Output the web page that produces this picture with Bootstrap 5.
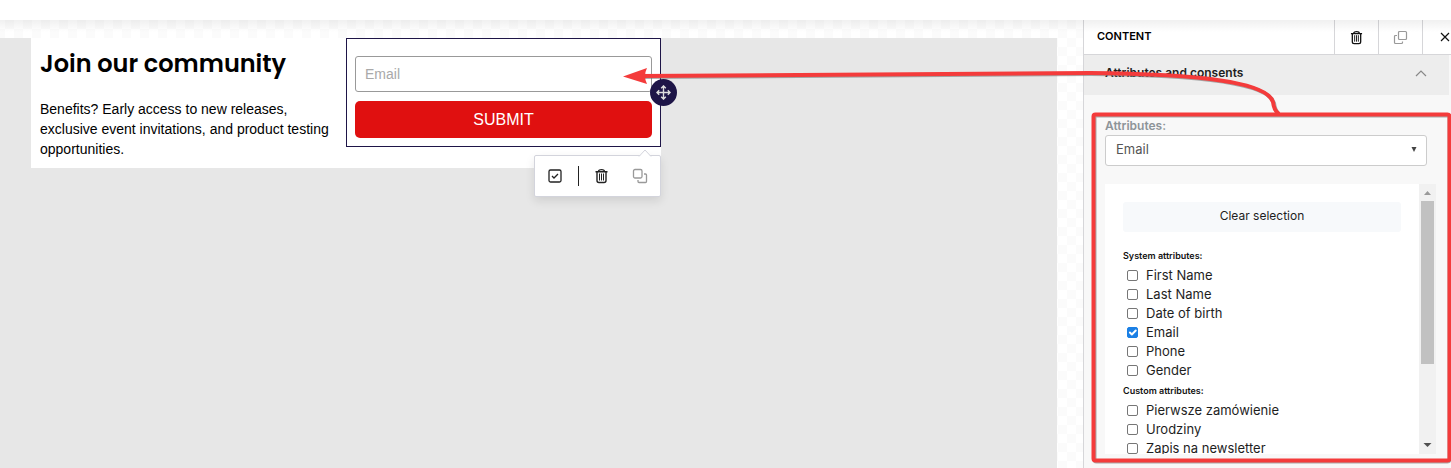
<!DOCTYPE html>
<html lang="en">
<head>
<meta charset="utf-8">
<meta name="viewport" content="width=device-width, initial-scale=1">
<title>Form editor</title>
<link href="https://cdn.jsdelivr.net/npm/bootstrap@5.3.0/dist/css/bootstrap.min.css" rel="stylesheet">
<style>
  body { font-family: Inter, sans-serif; font-size: 13px; color: #1e1e1e; background: #fff; }
  .topbar { height: 20px; }
  .workspace { min-height: 0; }
  .workspace-shade { top: 0; left: 0; right: 0; height: 12px; pointer-events: none; z-index: 2;
    background: linear-gradient(rgba(0,0,0,.06), rgba(0,0,0,0)); }
  .canvas-area { padding: 18px 26px 0 0; min-width: 0;
    background: repeating-conic-gradient(#fff 0 25%, #fbfbfb 0 50%) 5px 0 / 18px 18px; }
  .mail-bg { background: #e7e7e7; padding-left: 31px; }
  .mail-row { width: 630px; height: 130px; font-family: "Liberation Sans", Arial, sans-serif; color: #000; }
  .mail-copy { padding: 10px 0 0 9px; font-size: 14px; line-height: 20px; }
  .mail-copy h1 { font: 600 24px/32px Poppins, Inter, sans-serif; margin-bottom: 19px; }
  .form-block { border: 1px solid #1e1547; padding: 17px 8px 8px; height: 109px; }
  .mail-input { height: 36px; padding: 0 9px; font-size: 14px; border-color: #999; border-radius: 3px; }
  .mail-input::placeholder { color: #a9a9a9; }
  .mail-submit { height: 37px; margin-top: 9px; background: #e01010; color: #fff; font-size: 16px; border-radius: 5px; padding: 0; border: 0; }
  .tool-btn { background: none; border: 0; padding: 0; line-height: 0; color: #222; }
  .tool-btn.muted { color: #999; }
  .move-handle { width: 27px; height: 27px; right: -16px; top: 41px; background: #1e1547; z-index: 1; }
  .block-tools { top: 117px; right: 0; width: 127px; height: 42px; background: #fff; border: 1px solid #d3d4dc; border-radius: 2px; box-shadow: 0 4px 10px rgba(0,0,0,.1); }
  .block-tools .tool-tip { position: absolute; top: -7px; right: 8px; }
  .tool-group { gap: 15px; padding-left: 12px; }
  .tool-group .muted { margin-left: 8px; }
  .tool-split { width: 1px; height: 20px; background: #222; }

  .side-panel { width: 368px; background: #f8f8f8; border-left: 1px solid #d6d6d9; }
  .panel-head { height: 35px; background: #fff; border-bottom: 1px solid #d6d6d9; }
  .panel-head h2 { width: 250px; padding-left: 13px; font-size: 11px; line-height: 32px; font-weight: 600; color: #000; margin: 0; }
  .panel-head .tool-btn { width: 44px; border-left: 1px solid #d6d6d9; color: #111; }
  .panel-head .tool-btn.muted { color: #999; }
  .section-toggle { height: 40px; margin-right: 2px; background: #ededed; border: 0; padding: 0 22px 4px 21px; font-size: 12px; font-weight: 600; color: #1e1e1e; }
  .panel-body { padding: 22px 15px 14px 21px; min-height: 0; }
  .field-label { font-size: 12px; line-height: 18px; font-weight: 600; color: #8d9499; }
  .select-box { margin-right: 9px; margin-bottom: 18px; }
  .select-box select { height: 31px; padding: 0 10px 2px; font-size: 13px; color: #555; background: #fff; border-color: #ccc; border-radius: 3px; }
  .select-box svg { position: absolute; right: 10px; top: 12px; pointer-events: none; }
  .attr-list { min-height: 0; background: #fff; }
  .attr-items { padding: 18px 18px 0; }
  .clear-btn { height: 30px; background: #f7f9fb; border: 0; border-radius: 3px; padding: 0 0 3px; font-size: 12px; color: #1e1e1e; margin-bottom: 13px; }
  .group-title { font-size: 9px; line-height: 21px; font-weight: 600; color: #111; margin: 0; }
  .attr-option { height: 19px; padding-left: 4px; gap: 8px; }
  .attr-option input.form-check-input { width: 11px; height: 11px; margin: 0; border-radius: 2px; border: 1px solid #767676; background-size: 13px 13px; flex: none; }
  .attr-option input.form-check-input:checked { background-color: #1b80e5; border-color: #1b80e5; }
  .scroll-track { width: 17px; flex: none; background: #f1f1f1; }
  .scroll-track svg { height: 17px; width: 17px; flex: none; }
  .scroll-thumb { width: 13px; height: 69%; background: #c1c1c1; }
  .annotation { position: absolute; top: 0; right: 0; pointer-events: none; z-index: 5; }
</style>
</head>
<body class="vh-100 overflow-hidden d-flex flex-column position-relative">
<svg width="0" height="0" class="position-absolute" aria-hidden="true">
  <symbol id="i-trash" viewBox="0 0 14 16"><g fill="none" stroke="currentColor" stroke-width="1.4"><path d="M1 3.800h12M4 3.500C4 1 10 1 10 3.500M2.500 4v8.500c0 1.500.5 2 2 2h5c1.500 0 2-.5 2-2V4"/><path stroke-width="1" d="M5 5.500v7M7 5.500v7M9 5.500v7"/></g></symbol>
  <symbol id="i-copy" viewBox="0 0 16 16"><g fill="none" stroke="currentColor" stroke-width="1.300"><rect x="1.500" y="1.500" width="8.500" height="8.500" rx="1.500"/><path d="M12 6h1.500q1 0 1 1v6.500q0 1-1 1H7q-1 0-1-1V12"/></g></symbol>
</svg>
<header class="topbar flex-shrink-0 bg-white"></header>
<div class="workspace flex-fill d-flex position-relative">
  <div class="workspace-shade position-absolute"></div>
  <main class="canvas-area flex-fill d-flex flex-column">
    <div class="mail-bg flex-fill">
      <div class="mail-row row g-0 bg-white">
        <div class="col-6 mail-copy">
          <h1>Join our community</h1>
          <p class="mb-0">Benefits? Early access to new releases, exclusive event invitations, and product testing opportunities.</p>
        </div>
        <div class="col-6 position-relative">
          <form class="form-block" onsubmit="return false">
            <input type="email" class="form-control mail-input" placeholder="Email" aria-label="Email">
            <button type="submit" class="btn w-100 d-block mail-submit">SUBMIT</button>
          </form>
          <button type="button" class="tool-btn move-handle position-absolute rounded-circle d-flex align-items-center justify-content-center" aria-label="Move block">
            <svg width="15" height="15" viewBox="0 0 15 15" fill="none" stroke="#ddd" stroke-width="1.400"><path d="M7.500 1v13M1 7.500h13M5.200 3.200 7.500.9l2.300 2.300M5.200 11.800l2.300 2.300 2.300-2.300M3.200 5.200.9 7.500l2.300 2.300M11.800 5.200l2.300 2.300-2.300 2.300"/></svg>
          </button>
          <div class="block-tools position-absolute">
            <svg class="tool-tip" width="14" height="8" viewBox="0 0 14 8"><path d="M1 7.500 7 1l6 6.500" fill="#fff" stroke="#d3d4dc"/></svg>
            <div class="tool-group d-flex align-items-center h-100">
              <button type="button" class="tool-btn" aria-label="Select"><svg width="16" height="16" viewBox="0 0 16 16" fill="none" stroke="currentColor" stroke-width="1.300"><rect x="2" y="2" width="12" height="12" rx="1.500"/><path d="m5 8 2 2 4-4"/></svg></button>
              <span class="tool-split"></span>
              <button type="button" class="tool-btn" aria-label="Delete block"><svg width="15" height="16"><use href="#i-trash"/></svg></button>
              <button type="button" class="tool-btn muted" aria-label="Duplicate block"><svg width="16" height="16"><use href="#i-copy"/></svg></button>
            </div>
          </div>
        </div>
      </div>
    </div>
  </main>
  <aside class="side-panel flex-shrink-0 d-flex flex-column">
    <div class="panel-head d-flex flex-shrink-0 overflow-hidden">
      <h2 class="flex-shrink-0">CONTENT</h2>
      <button type="button" class="tool-btn flex-shrink-0" aria-label="Delete"><svg width="13" height="15"><use href="#i-trash"/></svg></button>
      <button type="button" class="tool-btn muted flex-shrink-0" aria-label="Duplicate"><svg width="15" height="15" viewBox="0 0 15 15" fill="none" stroke="currentColor" stroke-width="1.200"><rect x="5.500" y="1.500" width="8" height="8" rx="1"/><path d="M4 5.500H2.500q-1 0-1 1v6q0 1 1 1h6q1 0 1-1V11.500"/></svg></button>
      <button type="button" class="tool-btn flex-shrink-0" aria-label="Close"><svg width="10" height="10" viewBox="0 0 10 10" stroke="currentColor" stroke-width="1.200"><path d="m1 1 8 8M9 1 1 9"/></svg></button>
    </div>
    <button type="button" class="section-toggle flex-shrink-0 d-flex align-items-center justify-content-between" aria-expanded="true">Attributes and consents
      <svg width="12" height="7" viewBox="0 0 12 7" fill="none" stroke="#888" stroke-width="1.200"><path d="m1 6 5-5 5 5"/></svg>
    </button>
    <div class="panel-body flex-fill d-flex flex-column">
      <label class="field-label" for="attr">Attributes:</label>
      <div class="select-box position-relative flex-shrink-0">
        <select id="attr" class="form-select"><option>Email</option><option>Phone</option></select>
        <svg width="6" height="6" viewBox="0 0 6 6"><path d="M.5 0h5L3 5z" fill="#444"/></svg>
      </div>
      <div class="attr-list flex-fill d-flex">
        <div class="attr-items flex-fill overflow-hidden">
          <button type="button" class="btn w-100 clear-btn">Clear selection</button>
          <h3 class="group-title">System attributes:</h3>
          <label class="attr-option d-flex align-items-center"><input type="checkbox" class="form-check-input">First Name</label>
          <label class="attr-option d-flex align-items-center"><input type="checkbox" class="form-check-input">Last Name</label>
          <label class="attr-option d-flex align-items-center"><input type="checkbox" class="form-check-input">Date of birth</label>
          <label class="attr-option d-flex align-items-center"><input type="checkbox" class="form-check-input" checked>Email</label>
          <label class="attr-option d-flex align-items-center"><input type="checkbox" class="form-check-input">Phone</label>
          <label class="attr-option d-flex align-items-center"><input type="checkbox" class="form-check-input">Gender</label>
          <h3 class="group-title">Custom attributes:</h3>
          <label class="attr-option d-flex align-items-center"><input type="checkbox" class="form-check-input">Pierwsze zamówienie</label>
          <label class="attr-option d-flex align-items-center"><input type="checkbox" class="form-check-input">Urodziny</label>
          <label class="attr-option d-flex align-items-center"><input type="checkbox" class="form-check-input">Zapis na newsletter</label>
        </div>
        <div class="scroll-track d-flex flex-column align-items-center" aria-hidden="true">
          <svg viewBox="0 0 17 17"><path d="M5 11h7L8.500 7z" fill="#999"/></svg>
          <div class="flex-fill"><div class="scroll-thumb"></div></div>
          <svg viewBox="0 0 17 17"><path d="M4.500 6h8l-4 4z" fill="#505050"/></svg>
        </div>
      </div>
    </div>
  </aside>
</div>
<svg class="annotation" width="831" height="468" viewBox="620 0 831 468" aria-hidden="true">
  <g fill="none" stroke="#777" stroke-width="4" transform="translate(1 1)" opacity=".6">
    <rect x="1093.500" y="114.500" width="355" height="346" rx="2"/>
    <path d="M640 76L1090 73C1200 74 1267 82 1273 102Q1274 110 1278 113"/>
  </g>
  <g fill="none" stroke="#f43b3b" stroke-width="4" stroke-linecap="round">
    <rect x="1093.500" y="114.500" width="356" height="346" rx="2"/>
    <path d="M640 76L1090 73C1200 74 1267 82 1273 102Q1274 110 1278 113"/>
  </g>
  <path d="M623 76.500 647 68q-4 8 0 16z" fill="#f43b3b"/>
</svg>
<script src="https://cdn.jsdelivr.net/npm/bootstrap@5.3.0/dist/js/bootstrap.bundle.min.js"></script>
</body>
</html>
